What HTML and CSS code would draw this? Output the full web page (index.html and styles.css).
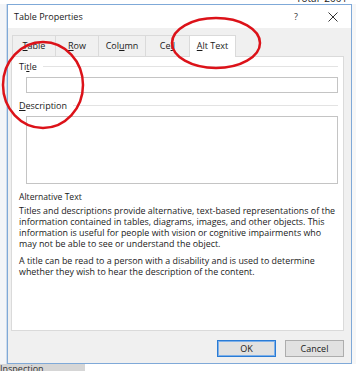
FILE: index.html
```html
<!DOCTYPE html>
<html lang="en">
<head>
    <meta charset="UTF-8">
    <title>Table Properties</title>
    <link rel="stylesheet" href="styles.css">
</head>
<body>
    <!-- Document behind the dialog -->
    <div class="doc-top">
        <span class="doc-total">Total&nbsp; 2001</span>
    </div>

    <div class="stage">
        <div class="doc-left"></div>

        <!-- Dialog -->
        <div class="dialog">
            <div class="titlebar">
                <span class="title">Table Properties</span>
                <span class="help">?</span>
                <svg class="close" width="10" height="10" viewBox="0 0 10 10">
                    <path d="M0.5 0.5 L9.5 9.5 M9.5 0.5 L0.5 9.5" stroke="#333" stroke-width="1" fill="none"/>
                </svg>
            </div>

            <div class="tabs">
                <div class="tab tab-table"><u>T</u>able</div>
                <div class="tab tab-row"><u>R</u>ow</div>
                <div class="tab tab-column">Col<u>u</u>mn</div>
                <div class="tab tab-cell">Ce<u>l</u>l</div>
                <div class="tab tab-alt active"><u>A</u>lt Text</div>
            </div>

            <div class="panel">
                <div class="group-label"><span>Ti<u>t</u>le</span></div>
                <div class="field"></div>

                <div class="group-label"><span><u>D</u>escription</span></div>
                <div class="field field-area"></div>

                <div class="help-title">Alternative Text</div>
                <p class="help-text">
                    Titles and descriptions provide alternative, text-based representations of the<br>
                    information contained in tables, diagrams, images, and other objects. This<br>
                    information is useful for people with vision or cognitive impairments who<br>
                    may not be able to see or understand the object.
                </p>
                <p class="help-text second">
                    A title can be read to a person with a disability and is used to determine<br>
                    whether they wish to hear the description of the content.
                </p>
            </div>

            <div class="buttons">
                <button class="btn btn-default">OK</button>
                <button class="btn">Cancel</button>
            </div>
        </div>

        <div class="doc-right"></div>
    </div>

    <div class="doc-bottom">
        <span class="doc-inspection">Inspection</span>
    </div>

    <!-- Red annotation circles drawn over the screenshot -->
    <svg class="marks" width="356" height="371" viewBox="0 0 356 371">
        <ellipse cx="216" cy="43" rx="44" ry="25" fill="none" stroke="#dc1219" stroke-width="2.5"/>
        <ellipse cx="43" cy="85" rx="40" ry="43" fill="none" stroke="#dc1219" stroke-width="2.5"/>
    </svg>
</body>
</html>
```

FILE: styles.css
```css
/* General */
body {
    margin: 0;
    width: 356px;
    height: 371px;
    overflow: hidden;
    position: relative;
    background-color: #ffffff;
    font-family: "Open Sans", "Noto Sans", sans-serif;
    color: #1a1a1a;
}

/* Document behind */
.doc-top {
    height: 4px;
    overflow: hidden;
}

.doc-total {
    display: block;
    margin-left: 296px;
    margin-top: -7px;
    font-size: 10px;
    line-height: 10px;
    color: #222222;
}

.stage {
    display: flex;
    height: 360px;
}

.doc-left {
    width: 6px;
    background-color: #f3f5f8;
    border-right: 1px solid #cddbeb;
}

.doc-right {
    flex: 1;
    background-color: #f7f7f7;
}

.doc-bottom {
    height: 7px;
    width: 85px;
    background-color: #d6d6d6;
    overflow: hidden;
}

.doc-inspection {
    display: block;
    font-size: 9px;
    line-height: 9px;
    color: #333333;
}

/* Dialog */
.dialog {
    width: 343px;
    border: 1px solid #7fa9d8;
    background-color: #f0f0f0;
    display: flex;
    flex-direction: column;
}

.titlebar {
    height: 23px;
    background-color: #ffffff;
    display: flex;
    align-items: center;
    padding-left: 6px;
    font-size: 9px;
    color: #1a1a1a;
}

.title {
    flex: 1;
}

.help {
    font-size: 9px;
    margin-right: 30px;
    color: #333333;
}

.close {
    margin-right: 13px;
}

/* Tabs */
.tabs {
    display: flex;
    align-items: flex-end;
    height: 28px;
    padding-left: 4px;
}

.tab {
    height: 21px;
    line-height: 20px;
    box-sizing: border-box;
    text-align: center;
    font-size: 9px;
    color: #1a1a1a;
    background-color: #f0f0f0;
    border: 1px solid #dadada;
    border-bottom: 0;
    margin-right: -1px;
}

.tab-table { width: 44px; }
.tab-row { width: 44px; }
.tab-column { width: 48px; }
.tab-cell { width: 45px; }

.tab-alt {
    width: 47px;
    height: 22px;
    background-color: #ffffff;
    position: relative;
    top: 1px;
}

/* Main panel */
.panel {
    height: 275px;
    box-sizing: border-box;
    margin-left: 3px;
    margin-right: 7px;
    background-color: #ffffff;
    border: 1px solid #dadada;
    padding: 2px 5px 0 7px;
}

.group-label {
    display: flex;
    align-items: center;
    height: 12px;
    font-size: 9px;
    margin-top: 1px;
}

.group-label::after {
    content: "";
    flex: 1;
    height: 1px;
    background-color: #e3e3e3;
    margin-left: 6px;
}

.group-label + .field {
    margin-top: 5px;
}

.field {
    height: 16px;
    box-sizing: border-box;
    margin-left: 7px;
    margin-bottom: 6px;
    border: 1px solid #c4c4c4;
    background-color: #ffffff;
}

.field-area {
    height: 68px;
    margin-bottom: 7px;
}

.help-title {
    font-size: 8.6px;
    line-height: 12px;
}

.help-text {
    margin: 2px 0 0 0;
    font-size: 8.9px;
    line-height: 11px;
    white-space: nowrap;
}

.help-text.second {
    margin-top: 6px;
}

/* Buttons */
.buttons {
    display: flex;
    justify-content: flex-end;
    gap: 9px;
    padding-top: 9px;
    padding-right: 7px;
}

.btn {
    width: 59px;
    height: 17px;
    padding: 0;
    font-family: "Open Sans", "Noto Sans", sans-serif;
    font-size: 9px;
    color: #1a1a1a;
    background-color: #e1e1e1;
    border: 1px solid #adadad;
}

.btn-default {
    border: 1px solid #2a7bd4;
    box-shadow: inset 0 0 0 1px #7db0ea;
}

/* Annotations */
.marks {
    position: absolute;
    top: 0;
    left: 0;
}
```
